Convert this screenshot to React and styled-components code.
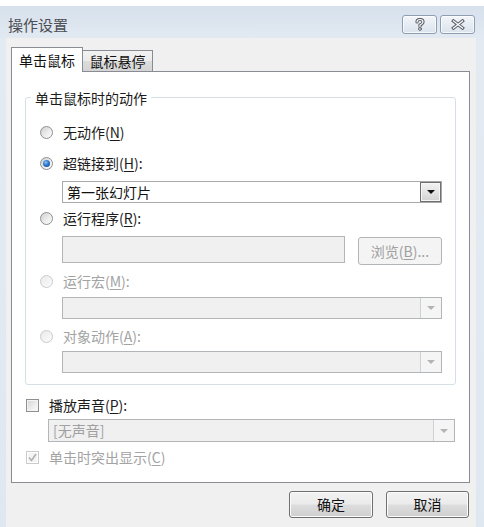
import React from 'react';
import styled, { createGlobalStyle } from 'styled-components';

const GlobalStyle = createGlobalStyle`
  html, body {
    margin: 0;
    padding: 0;
    background: #fff;
  }
  body {
    font-family: "Noto Sans CJK SC", "Noto Sans", sans-serif;
    font-size: 14px;
    color: #1b1b1b;
  }
`;

const Screen = styled.div`
  width: 484px;
  height: 527px;
  padding-top: 6px;
  box-sizing: border-box;
  overflow: hidden;
`;

const Window = styled.div`
  height: 521px;
  display: flex;
  flex-direction: column;
  padding: 0 8px 0 6px;
  background: linear-gradient(180deg, #d7e1ec 0px, #e3eaf2 36px, #dfe8f1 100%);
`;

const TitleBar = styled.div`
  height: 32px;
  display: flex;
  align-items: flex-start;
  justify-content: space-between;
  padding-left: 2px;
`;

const Title = styled.div`
  margin-top: 8px;
  line-height: 22px;
  font-size: 15px;
  color: #4b4f55;
`;

const Caption = styled.div`
  display: flex;
  gap: 3px;
  margin-top: 9px;
  margin-right: 1px;
`;

const CaptionButton = styled.div`
  width: 35px;
  height: 19px;
  box-sizing: border-box;
  border: 1px solid #8f9db0;
  border-radius: 3px;
  background: linear-gradient(180deg, #f3f6fa 0%, #e6ecf3 50%, #dbe3ec 100%);
  box-shadow: inset 0 0 0 1px rgba(255, 255, 255, 0.7);
  display: flex;
  align-items: center;
  justify-content: center;
`;

const Client = styled.div`
  flex: 1;
  background: #f0f0f0;
  padding: 9px 6px 0 5px;
  display: flex;
  flex-direction: column;
`;

const Tabs = styled.div`
  display: flex;
  align-items: flex-end;
  height: 25px;
  margin-bottom: -1px;
  position: relative;
  z-index: 1;
`;

const Tab = styled.div`
  box-sizing: border-box;
  width: ${p => (p.$active ? '72px' : '70px')};
  height: ${p => (p.$active ? '25px' : '21px')};
  margin-bottom: ${p => (p.$active ? '0' : '1px')};
  border: 1px solid #898c95;
  border-bottom: none;
  border-left: ${p => (p.$active ? '1px solid #898c95' : 'none')};
  background: ${p =>
    p.$active
      ? '#fff'
      : 'linear-gradient(180deg, #f2f2f2 0%, #ebebeb 50%, #dddddd 51%, #d4d4d4 100%)'};
  text-align: center;
  line-height: ${p => (p.$active ? '24px' : '21px')};
  color: #111;
`;

const Panel = styled.div`
  box-sizing: border-box;
  height: 412px;
  border: 1px solid #898c95;
  background: #fff;
  padding: 25px 13px 0 13px;
`;

const Group = styled.div`
  position: relative;
  border: 1px solid #d5dfe5;
  border-radius: 3px;
  padding: 0 13px 11px 14px;
`;

const Legend = styled.span`
  position: absolute;
  top: -10px;
  left: 5px;
  padding: 0 4px;
  background: #fff;
  line-height: 20px;
  color: #1b1b1b;
`;

const OptionRow = styled.div`
  display: flex;
  align-items: center;
  gap: 10px;
  height: 20px;
  margin-top: ${p => p.$top || 0}px;
  margin-left: ${p => p.$indent || 0}px;
  color: ${p => (p.$disabled ? '#a3a3a3' : '#1b1b1b')};
`;

const Radio = styled.span`
  position: relative;
  width: 13px;
  height: 13px;
  box-sizing: border-box;
  border-radius: 50%;
  border: 1px solid ${p => (p.$disabled ? '#c9cbcd' : '#8e8f8f')};
  background: ${p =>
    p.$disabled
      ? 'linear-gradient(135deg, #eaeaea, #fbfbfb)'
      : 'linear-gradient(135deg, #cfcfcf 0%, #ececec 55%, #fdfdfd 100%)'};
  flex: none;

  &::after {
    content: '';
    display: ${p => (p.$checked ? 'block' : 'none')};
    position: absolute;
    left: 2px;
    top: 2px;
    width: 7px;
    height: 7px;
    border-radius: 50%;
    background: radial-gradient(circle at 40% 35%, #8cc4f5 0%, #2f78cc 45%, #0f3f7d 100%);
  }
`;

const Check = styled.span`
  width: 13px;
  height: 13px;
  box-sizing: border-box;
  border: 1px solid ${p => (p.$disabled ? '#c9cbcd' : '#8e8f8f')};
  background: ${p =>
    p.$disabled
      ? '#f4f4f4'
      : 'linear-gradient(135deg, #d3d3d3 0%, #ececec 55%, #fbfbfb 100%)'};
  box-shadow: inset 0 0 0 1px ${p => (p.$disabled ? '#fff' : '#f4f4f4')};
  margin-left: 1px;
  display: flex;
  align-items: center;
  justify-content: center;
  flex: none;
`;

const Select = styled.div`
  box-sizing: border-box;
  width: ${p => p.$width}px;
  height: ${p => p.$height || 22}px;
  margin-top: ${p => p.$top || 0}px;
  margin-left: ${p => p.$indent || 22}px;
  border: 1px solid ${p => (p.$disabled ? '#b3b6b9' : '#a7a9ac')};
  background: ${p => (p.$disabled ? '#f0f0f0' : '#fff')};
  display: flex;
  color: ${p => (p.$disabled ? '#a0a0a0' : '#111')};
`;

const SelectText = styled.div`
  flex: 1;
  padding-left: 4px;
  line-height: 20px;
`;

const ArrowBox = styled.div`
  width: 21px;
  box-sizing: border-box;
  display: flex;
  align-items: center;
  justify-content: center;
  border-left: 1px solid ${p => (p.$disabled ? '#cfd1d3' : '#6f6f6f')};
  ${p =>
    p.$disabled
      ? 'background: #f5f5f5;'
      : `
    border: 1px solid #6f6f6f;
    margin: 0 0 0 0;
    background: linear-gradient(180deg, #f2f2f2 0%, #e4e4e4 50%, #d2d2d2 100%);
    box-shadow: inset 0 0 0 1px #f6f6f6;
  `}
`;

const Triangle = styled.span`
  width: 0;
  height: 0;
  border-left: 4px solid transparent;
  border-right: 4px solid transparent;
  border-top: 4px solid ${p => (p.$disabled ? '#b4b4b4' : '#111')};
`;

const FieldLine = styled.div`
  display: flex;
  align-items: center;
  justify-content: space-between;
  margin-top: ${p => p.$top || 0}px;
  margin-left: 22px;
  width: 380px;
`;

const TextBox = styled.div`
  box-sizing: border-box;
  width: 283px;
  height: 27px;
  border: 1px solid #b3b6b9;
  background: #f0f0f0;
`;

const Browse = styled.div`
  box-sizing: border-box;
  width: 84px;
  height: 28px;
  margin-top: 4px;
  border: 1px solid #b3b6b9;
  border-radius: 3px;
  background: #f4f4f4;
  color: #a0a0a0;
  text-align: center;
  line-height: 26px;
`;

const ButtonRow = styled.div`
  display: flex;
  justify-content: flex-end;
  gap: 13px;
  margin-top: 8px;
  padding-right: 1px;
`;

const Button = styled.div`
  box-sizing: border-box;
  width: ${p => p.$width}px;
  height: 27px;
  border: 1px solid #707070;
  border-radius: 3px;
  background: linear-gradient(180deg, #f2f2f2 0%, #ebebeb 48%, #dddddd 52%, #cfcfcf 100%);
  box-shadow: inset 0 0 0 1px #fcfcfc;
  text-align: center;
  line-height: 25px;
  color: #111;
`;

const Key = styled.span`
  text-decoration: underline;
  text-underline-offset: 2px;
`;

const HelpIcon = () => (
  <svg width="12" height="13" viewBox="0 0 12 13">
    <g fill="none" strokeLinecap="round" strokeLinejoin="round">
      <path d="M3 4 Q3 1.5 6 1.5 Q9 1.5 9 4 Q9 5.5 6 7 L6 8.5" stroke="#5b5f66" strokeWidth="3.2" />
      <path d="M3 4 Q3 1.5 6 1.5 Q9 1.5 9 4 Q9 5.5 6 7 L6 8.5" stroke="#fdfdfd" strokeWidth="1.2" />
      <circle cx="6" cy="11" r="1.4" fill="#fdfdfd" stroke="#5b5f66" strokeWidth="1" />
    </g>
  </svg>
);

const CloseIcon = () => (
  <svg width="14" height="11" viewBox="0 0 14 11">
    <g strokeLinecap="square">
      <path d="M2.5 2 L11.5 9 M11.5 2 L2.5 9" stroke="#5b5f66" strokeWidth="3.4" />
      <path d="M2.5 2 L11.5 9 M11.5 2 L2.5 9" stroke="#fdfdfd" strokeWidth="1.3" />
    </g>
  </svg>
);

const CheckMark = () => (
  <svg width="9" height="9" viewBox="0 0 9 9">
    <path d="M1 4.5 L3.5 7.5 L8 1" fill="none" stroke="#b0b0b0" strokeWidth="1.6" />
  </svg>
);

const Arrow = ({ disabled }) => (
  <ArrowBox $disabled={disabled}>
    <Triangle $disabled={disabled} />
  </ArrowBox>
);

const App = () => (
  <Screen>
    <GlobalStyle />
    <Window>
      <TitleBar>
        <Title>操作设置</Title>
        <Caption>
          <CaptionButton><HelpIcon /></CaptionButton>
          <CaptionButton><CloseIcon /></CaptionButton>
        </Caption>
      </TitleBar>

      <Client>
        <Tabs>
          <Tab $active>单击鼠标</Tab>
          <Tab>鼠标悬停</Tab>
        </Tabs>

        <Panel>
          <Group>
            <Legend>单击鼠标时的动作</Legend>

            <OptionRow $top={24}>
              <Radio />
              <span>无动作(<Key>N</Key>)</span>
            </OptionRow>

            <OptionRow $top={11}>
              <Radio $checked />
              <span>超链接到(<Key>H</Key>):</span>
            </OptionRow>
            <Select $width={380} $top={8}>
              <SelectText>第一张幻灯片</SelectText>
              <Arrow />
            </Select>

            <OptionRow $top={5}>
              <Radio />
              <span>运行程序(<Key>R</Key>):</span>
            </OptionRow>
            <FieldLine $top={5}>
              <TextBox />
              <Browse>浏览(<Key>B</Key>)...</Browse>
            </FieldLine>

            <OptionRow $top={6} $disabled>
              <Radio $disabled />
              <span>运行宏(<Key>M</Key>):</span>
            </OptionRow>
            <Select $width={380} $top={6} $disabled>
              <SelectText />
              <Arrow disabled />
            </Select>

            <OptionRow $top={7} $disabled>
              <Radio $disabled />
              <span>对象动作(<Key>A</Key>):</span>
            </OptionRow>
            <Select $width={380} $top={5} $disabled>
              <SelectText />
              <Arrow disabled />
            </Select>
          </Group>

          <OptionRow $top={10}>
            <Check />
            <span>播放声音(<Key>P</Key>):</span>
          </OptionRow>
          <Select $width={407} $height={23} $top={4} $indent={23} $disabled>
            <SelectText>[无声音]</SelectText>
            <Arrow disabled />
          </Select>

          <OptionRow $top={5} $disabled>
            <Check $disabled><CheckMark /></Check>
            <span>单击时突出显示(<Key>C</Key>)</span>
          </OptionRow>
        </Panel>

        <ButtonRow>
          <Button $width={84}>确定</Button>
          <Button $width={83}>取消</Button>
        </ButtonRow>
      </Client>
    </Window>
  </Screen>
);

export default App;
